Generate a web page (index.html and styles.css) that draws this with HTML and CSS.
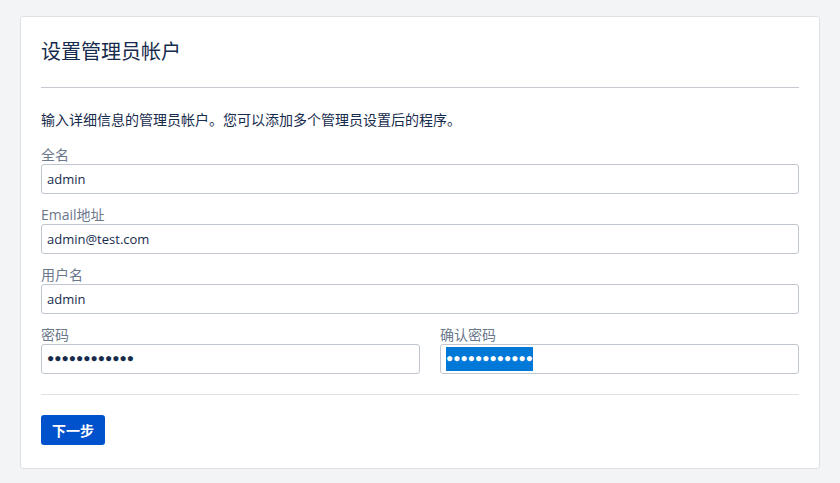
FILE: index.html
```html
<!DOCTYPE html>
<html lang="zh-CN">
<head>
<meta charset="utf-8">
<title>设置管理员帐户</title>
<link rel="stylesheet" href="styles.css">
</head>
<body>
<div class="card">
  <h1 class="title">设置管理员帐户</h1>
  <hr class="rule">
  <p class="desc">输入详细信息的管理员帐户。您可以添加多个管理员设置后的程序。</p>
  <div class="field">
    <label class="label">全名</label>
    <input class="input" type="text" value="admin">
  </div>
  <div class="field">
    <label class="label">Email地址</label>
    <input class="input" type="text" value="admin@test.com">
  </div>
  <div class="field">
    <label class="label">用户名</label>
    <input class="input" type="text" value="admin">
  </div>
  <div class="row">
    <div class="field col-half">
      <label class="label">密码</label>
      <div class="input pwbox"><span class="dots">●●●●●●●●●●●●</span></div>
    </div>
    <div class="field col-rest">
      <label class="label">确认密码</label>
      <div class="input pwbox"><span class="dots selected">●●●●●●●●●●●●</span></div>
    </div>
  </div>
  <hr class="rule light">
  <button class="btn" type="button">下一步</button>
</div>
</body>
</html>
```
FILE: styles.css
```css
html, body {
  background: #f3f4f6;
}
body {
  margin: 16px 20px 0 20px;
  font-family: "Segoe UI", "Open Sans", "Noto Sans CJK SC", sans-serif;
  color: #172b4d;
}
.card {
  box-sizing: border-box;
  width: 800px;
  background: #fff;
  border: 1px solid #dfe1e6;
  border-radius: 3px;
  padding: 23px 20px 23px 20px;
}
.title {
  margin: 0;
  font-size: 20px;
  line-height: 24px;
  font-weight: 400;
  color: #172b4d;
}
.rule {
  margin: 23px 0 0 0;
  border: 0;
  height: 1px;
  background: #c8cad1;
}
.rule.light {
  margin-top: 20px;
  background: #dfe1e6;
}
.desc {
  margin: 22px 0 16px 0;
  font-size: 14px;
  line-height: 20px;
}
.field {
  display: flex;
  flex-direction: column;
  margin-bottom: 12px;
}
.row .field {
  margin-bottom: 0;
}
.label {
  font-size: 14px;
  line-height: 18px;
  color: #6b778c;
}
.input {
  box-sizing: border-box;
  height: 30px;
  border: 1px solid #c1c7d0;
  border-radius: 3px;
  padding: 0 5px;
  font-family: inherit;
  font-size: 13px;
  color: #172b4d;
  background: #fff;
  outline: none;
}
.pwbox {
  display: flex;
  align-items: center;
}
.dots {
  font-family: "Liberation Sans", Arial, sans-serif;
  font-size: 12px;
  line-height: 19px;
  color: #172b4d;
  padding: 2px 0 3px 0;
  letter-spacing: 0;
}
.dots.selected {
  background: #0078d7;
  color: #fff;
}
.row {
  display: flex;
  gap: 20px;
}
.col-half {
  flex: 0 0 379px;
}
.col-rest {
  flex: 1 1 auto;
}
.btn {
  margin-top: 20px;
  width: 64px;
  height: 30px;
  border: 0;
  border-radius: 3px;
  background: #0052cc;
  color: #fff;
  font-family: inherit;
  font-size: 14px;
  font-weight: 700;
  padding: 0;
}
```
